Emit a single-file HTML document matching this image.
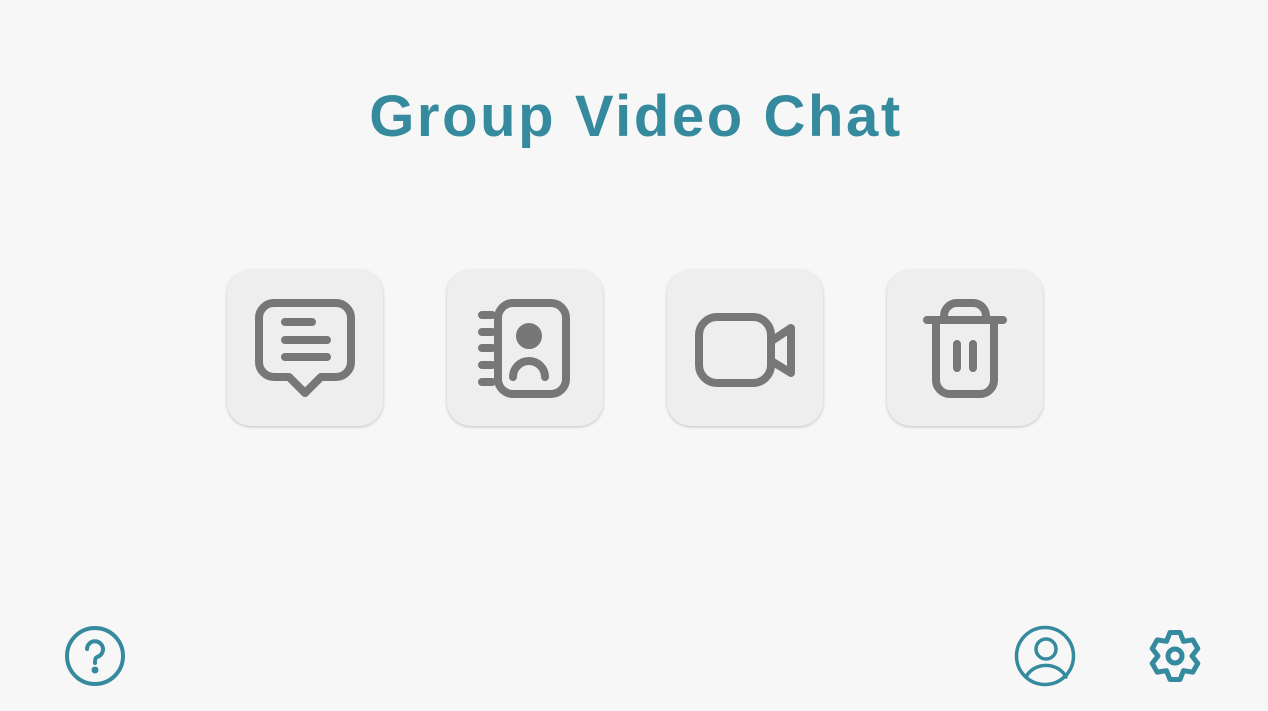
<!DOCTYPE html>
<html><head><meta charset="utf-8"><style>
html,body{margin:0;padding:0;background:#f7f7f7;width:1268px;height:711px;overflow:hidden;font-family:"Liberation Sans",sans-serif}
h1{position:absolute;left:0;width:1272px;top:82px;margin:0;text-align:center;color:#358a9e;font-size:58px;font-weight:bold;letter-spacing:2.6px;line-height:70px}
.b{position:absolute;top:270px;width:156px;height:156px;border-radius:24px;background:#eeeeee;box-shadow:0 1px 3px rgba(0,0,0,.22)}
.b svg{position:absolute;left:0;top:0}
.i{position:absolute}
</style></head><body>
<h1>Group Video Chat</h1>
<div class="b" style="left:227px"><svg width="156" height="156" fill="none" stroke="#777" stroke-width="8" stroke-linecap="round" stroke-linejoin="round">
<path d="M47 33H109A15 15 0 0 1 124 48V92A15 15 0 0 1 109 107H94L78 123L62 107H47A15 15 0 0 1 32 92V48A15 15 0 0 1 47 33Z"/>
<path d="M58 52H85M58 70H100M58 87H100"/></svg></div>
<div class="b" style="left:447px"><svg width="156" height="156" fill="none" stroke="#777" stroke-width="8" stroke-linecap="round" stroke-linejoin="round">
<rect x="51" y="33" width="68" height="91" rx="15"/>
<path d="M35 45H45M35 62H45M35 78H45M35 95H45M35 112H45"/>
<circle cx="82" cy="66" r="9" fill="#777"/>
<path d="M66 107A16 16 0 0 1 98 107"/></svg></div>
<div class="b" style="left:667px"><svg width="156" height="156" fill="none" stroke="#777" stroke-width="8" stroke-linecap="round" stroke-linejoin="round">
<rect x="32" y="47" width="72" height="66" rx="18"/>
<path d="M106 70L124 58V103L106 92"/></svg></div>
<div class="b" style="left:887px"><svg width="156" height="156" fill="none" stroke="#777" stroke-width="8" stroke-linecap="round" stroke-linejoin="round">
<path d="M40 50H116M57 50V46A13 13 0 0 1 70 33H86A13 13 0 0 1 99 46V50"/>
<path d="M49 50V110A14 14 0 0 0 63 124H93A14 14 0 0 0 107 110V50"/>
<path d="M70 74V98M86 74V98"/></svg></div>
<svg class="i" style="left:60px;top:621px" width="70" height="70" fill="none" stroke="#358a9e" stroke-width="4" stroke-linecap="round">
<circle cx="35" cy="35" r="28"/><path d="M27 28A8 8 0 1 1 37 36Q35 37 35 41V42"/><circle cx="35" cy="49" r="1.5" fill="#358a9e"/></svg>
<svg class="i" style="left:1010px;top:621px" width="70" height="70" fill="none" stroke="#358a9e" stroke-width="3.5" stroke-linecap="round">
<circle cx="35" cy="35" r="28.5"/><circle cx="36" cy="28" r="10"/><path d="M16 56A22 20 0 0 1 56 56"/></svg>
<svg class="i" style="left:1140px;top:621px" width="70" height="70" fill="none" stroke="#358a9e" stroke-width="5" stroke-linejoin="round">
<path d="M30 11.5L40 11.5L43.5 20.3L52.8 18.9L57.8 27.6L52 35L57.8 42.4L52.8 51.1L43.5 49.7L40 58.5L30 58.5L26.5 49.7L17.2 51.1L12.2 42.4L18 35L12.2 27.6L17.2 18.9L26.5 20.3Z"/>
<circle cx="35" cy="35" r="7"/></svg>
</body></html>
